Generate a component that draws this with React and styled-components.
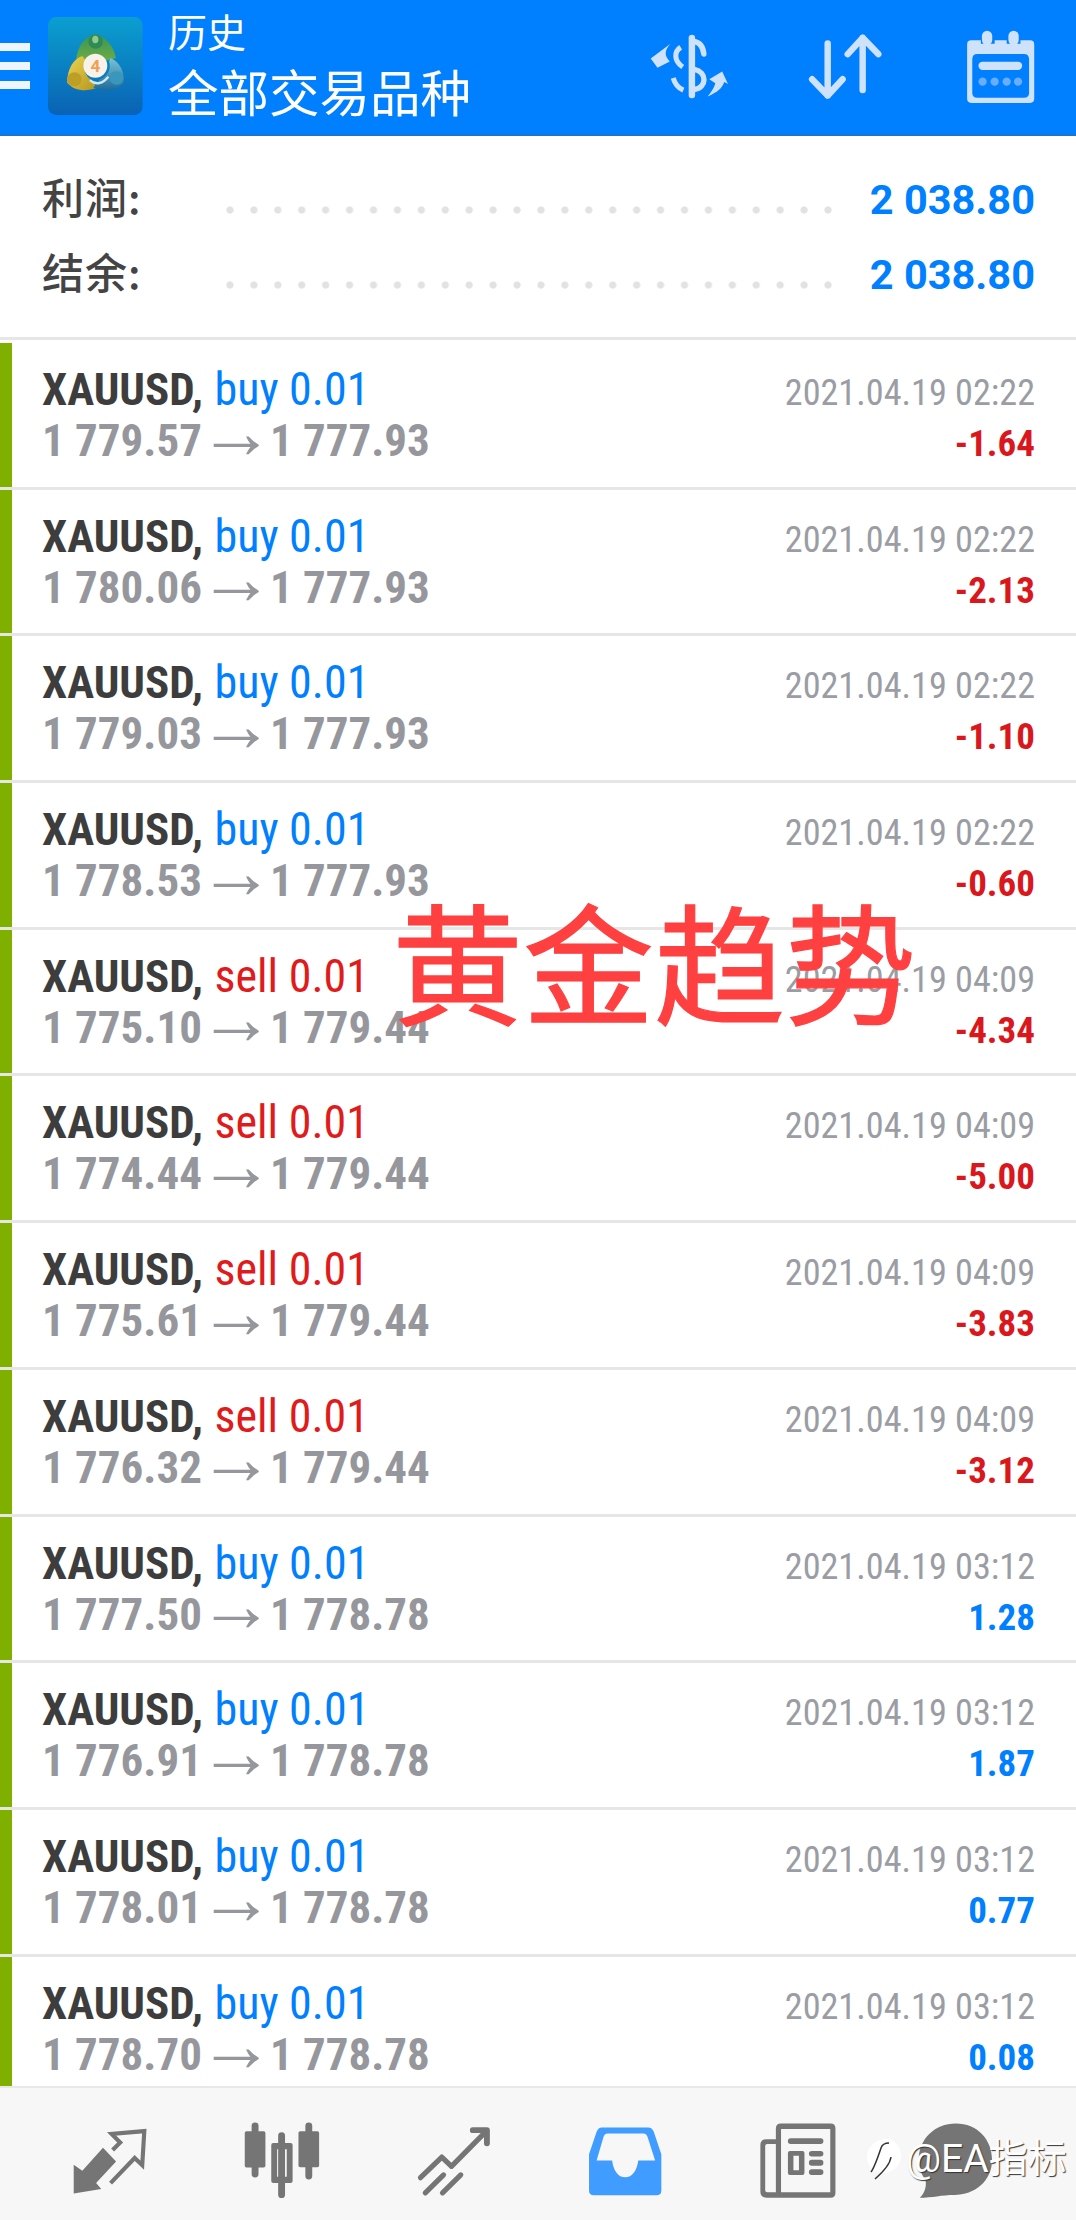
import React from "react";
import styled, { createGlobalStyle } from "styled-components";

const Global = createGlobalStyle`
  html, body { margin: 0; padding: 0; background: #fff; }
  body { font-family: Roboto, "Noto Sans CJK SC", sans-serif; }
`;

const cjk = `"Noto Sans CJK SC", "Noto Sans", sans-serif`;
const roboto = `Roboto, "Liberation Sans", sans-serif`;

const Page = styled.div`
  position: relative;
  width: 1076px;
  height: 2220px;
  display: flex;
  flex-direction: column;
  overflow: hidden;
  background: #fff;
`;

const Header = styled.header`
  flex: none;
  height: 134px;
  background: #007fff;
  border-bottom: 2px solid #1b74d2;
  display: flex;
  align-items: center;
  color: #fff;
`;
const Burger = styled.div`
  width: 30px;
  height: 46px;
  margin-top: -2px;
  display: flex;
  flex-direction: column;
  justify-content: space-between;
  & > i { display: block; height: 8px; background: #eef5ff; }
`;
const LogoBox = styled.svg`
  width: 96px;
  height: 100px;
  margin-left: 18px;
  margin-top: -3px;
  flex: none;
`;
const Titles = styled.div`
  margin-left: 24px;
  margin-top: -5px;
  display: flex;
  flex-direction: column;
  font-family: ${cjk};
`;
const SubTitle = styled.div`
  font-size: 39px;
  line-height: 50px;
  margin-top: -4px;
  margin-bottom: 5px;
`;
const MainTitle = styled.div`
  font-size: 50.5px;
  line-height: 60px;
  white-space: nowrap;
`;
const HeadIcons = styled.div`
  margin-left: auto;
  margin-right: 41px;
  display: flex;
  align-items: center;
`;
const HeadIcon = styled.svg`
  display: block;
  flex: none;
  margin-left: ${(p) => p.$ml}px;
`;

const Summary = styled.section`
  flex: none;
  height: 204px;
  padding: 35px 41px 0 42px;
  box-sizing: border-box;
  border-bottom: 3px solid #e6e6e6;
  display: flex;
  flex-direction: column;
  gap: 18px;
`;
const SumRow = styled.div`
  display: flex;
  height: 57px;
  align-items: center;
`;
const SumLabel = styled.div`
  width: 184px;
  flex: none;
  font-family: ${cjk};
  font-size: 42px;
  font-weight: 500;
  color: #444;
  margin-top: -8px;
  letter-spacing: 1px;
`;
const Dots = styled.div`
  flex: none;
  width: 608px;
  height: 8px;
  margin-top: 20px;
  background: radial-gradient(circle, #e2e2e2 3.2px, transparent 4px) -8px 0 / 23.93px 8px repeat-x;
`;
const SumValue = styled.div`
  margin-left: auto;
  font-family: ${roboto};
  font-weight: 700;
  font-size: 41.5px;
  color: #007fff;
  white-space: nowrap;
`;

const List = styled.main`
  flex: 1;
  min-height: 0;
  padding-top: 3px;
  overflow: hidden;
`;
const Row = styled.div`
  height: 146.7px;
  box-sizing: border-box;
  border-bottom: 3px solid #e6e6e6;
  padding: 0 41px 0 0;
  display: flex;
  font-family: ${roboto};
`;
const Bar = styled.div`
  flex: none;
  width: 12px;
  background: #7fb000;
`;
const LeftCol = styled.div`
  margin-left: 30px;
  display: flex;
  flex-direction: column;
`;
const RightCol = styled.div`
  margin-left: auto;
  display: flex;
  flex-direction: column;
  align-items: flex-end;
`;
const Title = styled.div`
  font-size: 45px;
  line-height: 51px;
  margin-top: 21px;
  font-stretch: 75%;
  white-space: nowrap;
  color: #3d3d3d;
  font-weight: 700;
`;
const Trade = styled.span`
  font-weight: 400;
  font-size: 46px;
  margin-left: 1px;
  color: ${(p) => (p.$sell ? "#e01b1b" : "#007fff")};
`;
const Prices = styled.div`
  font-size: 45px;
  line-height: 51px;
  font-stretch: 75%;
  font-weight: 700;
  color: #96979c;
  white-space: nowrap;
  display: flex;
  align-items: center;
`;
const Arrow = styled.span`
  flex: none;
  width: 46px;
  margin: -18px 11px 0 11px;
  display: flex;
  justify-content: center;
  font-family: ${roboto};
  font-weight: 400;
  font-size: 76px;
  line-height: 0;
  font-stretch: 100%;
`;
const DateText = styled.div`
  font-size: 36.2px;
  line-height: 51px;
  margin-top: 24px;
  font-stretch: 75%;
  color: #9a9da3;
  white-space: nowrap;
`;
const Profit = styled.div`
  font-size: 37px;
  line-height: 51px;
  font-stretch: 75%;
  font-weight: 700;
  color: ${(p) => (p.$neg ? "#d9171c" : "#007fff")};
`;

const Footer = styled.footer`
  flex: none;
  height: 134px;
  box-sizing: border-box;
  background: #f7f7f7;
  border-top: 2px solid #e8e8e8;
  padding: 14px 20px 0 24px;
  display: grid;
  grid-template-columns: repeat(6, 172px);
  align-items: center;
  justify-items: center;
`;
const FootIcon = styled.svg`
  display: block;
  fill: ${(p) => (p.$active ? "#409cff" : "#757575")};
  stroke: none;
  transform: translateX(${(p) => p.$dx || 0}px);
`;

const Stamp = styled.div`
  position: absolute;
  left: 392px;
  top: 878px;
  font-family: ${cjk};
  font-weight: 400;
  font-size: 131px;
  line-height: 160px;
  color: #ff4040;
  -webkit-text-stroke: 1.2px #ff4040;
  white-space: nowrap;
`;
const Mark = styled.div`
  position: absolute;
  left: 866px;
  top: 2134px;
  display: flex;
  align-items: center;
  gap: 4px;
  font-family: ${roboto}, ${cjk};
  font-size: 39px;
  line-height: 50px;
  color: #fff;
  text-shadow: 1px 1px 1px #333;
  white-space: nowrap;
`;
const MarkIcon = styled.svg`
  display: block;
  flex: none;
`;

const rows = [
  ["buy", "1 779.57", "1 777.93", "02:22", "-1.64"],
  ["buy", "1 780.06", "1 777.93", "02:22", "-2.13"],
  ["buy", "1 779.03", "1 777.93", "02:22", "-1.10"],
  ["buy", "1 778.53", "1 777.93", "02:22", "-0.60"],
  ["sell", "1 775.10", "1 779.44", "04:09", "-4.34"],
  ["sell", "1 774.44", "1 779.44", "04:09", "-5.00"],
  ["sell", "1 775.61", "1 779.44", "04:09", "-3.83"],
  ["sell", "1 776.32", "1 779.44", "04:09", "-3.12"],
  ["buy", "1 777.50", "1 778.78", "03:12", "1.28"],
  ["buy", "1 776.91", "1 778.78", "03:12", "1.87"],
  ["buy", "1 778.01", "1 778.78", "03:12", "0.77"],
  ["buy", "1 778.70", "1 778.78", "03:12", "0.08"],
];

const Logo = () => (
  <LogoBox viewBox="140 50 280 290">
    <defs>
      <linearGradient id="lg" x1="0" y1="0" x2="0" y2="1">
        <stop offset="0" stopColor="#0b9fd0" />
        <stop offset="1" stopColor="#0a62b4" />
      </linearGradient>
      <linearGradient id="gr" x1="0" y1="0" x2="0" y2="1">
        <stop offset="0" stopColor="#3a9455" />
        <stop offset="1" stopColor="#6fae45" />
      </linearGradient>
      <linearGradient id="ye" x1="0" y1="0" x2="1" y2="1">
        <stop offset="0" stopColor="#eed552" />
        <stop offset="1" stopColor="#b3951d" />
      </linearGradient>
      <linearGradient id="bl" x1="0" y1="0" x2="0" y2="1">
        <stop offset="0" stopColor="#78c4d8" />
        <stop offset="1" stopColor="#1c6a9b" />
      </linearGradient>
    </defs>
    <rect x="140" y="52" width="276" height="286" rx="24" fill="url(#lg)" />
    <path d="M278 102C250 108 226 136 222 176L252 186C264 168 292 166 308 180L338 172C332 136 306 108 278 102Z" fill="url(#gr)" />
    <circle cx="279" cy="124" r="21" fill="#2f8a55" />
    <ellipse cx="278" cy="118" rx="9" ry="11" fill="#8fcb8e" />
    <path d="M240 166C212 176 196 206 196 244C216 268 252 272 284 258L262 232C246 220 240 192 248 176Z" fill="url(#ye)" />
    <circle cx="217" cy="234" r="21" fill="#bd9f26" />
    <path d="M322 172C350 184 364 212 360 244C342 268 302 274 272 258L292 234C312 228 326 204 318 182Z" fill="url(#bl)" />
    <circle cx="340" cy="230" r="20" fill="#3a96bb" />
    <path d="M262 236C280 252 300 246 316 226" fill="none" stroke="#cfe8ee" strokeWidth="7" />
    <circle cx="278" cy="194" r="35" fill="#f7f3ea" />
    <text x="278" y="212" textAnchor="middle" fontFamily="Roboto, sans-serif" fontWeight="700" fontSize="50" fill="#f0a050">4</text>
  </LogoBox>
);

const SwapIcon = () => (
  <HeadIcon width="80" height="66" viewBox="325 95 235 190" $ml={0}>
    <g fill="none" stroke="#cfe2fb" strokeWidth="16" strokeLinecap="round">
      <path d="M451 105V272" strokeWidth="19" />
      <path d="M458 115C474 118 484 130 486 152" />
      <path d="M418 132C398 145 398 172 424 190" strokeLinecap="butt" strokeWidth="15" />
      <path d="M458 197C496 205 496 250 458 256" />
      <path d="M396 222C402 242 412 252 426 258" strokeLinecap="butt" strokeWidth="15" />
    </g>
    <path d="M330 165L388 122C372 140 368 155 386 174L350 192z" fill="#cfe2fb" />
    <path d="M557 240L540 203L502 226L520 238C516 252 508 264 497 277C526 264 540 252 546 234z" fill="#cfe2fb" />
  </HeadIcon>
);
const SortIcon = () => (
  <HeadIcon width="74" height="68" viewBox="785 95 218 198" $ml={79}>
    <g fill="none" stroke="#cfe2fb" strokeWidth="19" strokeLinecap="round" strokeLinejoin="round">
      <path d="M843 125V278M797 230L843 278L887 230" />
      <path d="M946 262V108M902 156L946 108L992 156" />
    </g>
  </HeadIcon>
);
const CalendarIcon = () => (
  <HeadIcon width="69" height="74" viewBox="1247 85 200 215" $ml={84}>
    <path fillRule="evenodd" fill="#cfe2fb" d="M1262 115H1290V125H1330V115H1365V125H1405V115H1433Q1445 115 1445 127V285Q1445 297 1433 297H1262Q1250 297 1250 285V127Q1250 115 1262 115ZM1280 155Q1265 155 1265 170V268Q1265 282 1280 282H1415Q1430 282 1430 268V170Q1430 155 1415 155Z" />
    <rect x="1293" y="87" width="30" height="42" rx="15" fill="#cfe2fb" />
    <rect x="1370" y="87" width="30" height="42" rx="15" fill="#cfe2fb" />
    <rect x="1283" y="177" width="127" height="24" rx="12" fill="#cfe2fb" />
    <g fill="#68aefc">
      <circle cx="1295" cy="235" r="12" />
      <circle cx="1330" cy="235" r="12" />
      <circle cx="1365" cy="235" r="12" />
      <circle cx="1398" cy="235" r="12" />
    </g>
  </HeadIcon>
);

const icon = (w, h) => ({ width: w / 2.904, height: h / 2.904 });

const TradeIcon = () => (
  <FootIcon {...icon(220, 200)} viewBox="210 225 220 200">
    <path d="M215 335V418L295 405L280 388L338 325L300 285L240 352z" />
    <path d="M322 388L392 315L414 336L420 237L325 245L350 270L328 292" fill="none" stroke="#757575" strokeWidth="12" />
  </FootIcon>
);
const CandleIcon = () => (
  <FootIcon {...icon(230, 230)} viewBox="700 210 230 230">
    <rect x="728" y="214" width="20" height="160" rx="10" />
    <rect x="708" y="240" width="60" height="105" rx="5" />
    <rect x="805" y="243" width="20" height="191" rx="10" />
    <path fillRule="evenodd" d="M791 274H841Q847 274 847 280V384Q847 390 841 390H791Q785 390 785 384V280Q785 274 791 274ZM802 292V372H830V292Z" />
    <rect x="884" y="214" width="20" height="166" rx="10" />
    <rect x="864" y="240" width="60" height="104" rx="5" />
  </FootIcon>
);
const ChartIcon = () => (
  <FootIcon {...icon(220, 210)} viewBox="1205 215 220 210">
    <g fill="none" stroke="#757575" strokeWidth="15" strokeLinecap="round" strokeLinejoin="round">
      <path d="M1218 368L1280 308L1308 335L1402 240" />
      <path d="M1232 412L1285 360M1282 412L1335 360" />
      <path d="M1370 230H1411V268" strokeWidth="17" />
    </g>
  </FootIcon>
);
const InboxIcon = () => (
  <FootIcon $active {...icon(220, 206)} viewBox="150 218 220 206">
    <path fillRule="evenodd" d="M190 222H325Q336 222 341 235L363 300V405Q363 419 349 419H167Q153 419 153 405V300L175 235Q180 222 190 222ZM208 240Q198 240 195 250L175 318H220C224 348 238 367 258 367C278 367 292 348 296 318H345L323 250Q320 240 310 240Z" />
  </FootIcon>
);
const NewsIcon = () => (
  <FootIcon {...icon(226, 224)} viewBox="648 208 226 224">
    <path fillRule="evenodd" d="M712 212H856Q870 212 870 226V414Q870 428 856 428H670Q652 428 652 410V275Q652 258 670 258H697V226Q697 212 712 212ZM712 228V412H855V228ZM697 272H672Q666 272 666 278V406Q666 412 672 412H697Z" />
    <rect x="732" y="255" width="103" height="17" rx="8" />
    <path fillRule="evenodd" d="M738 292H774Q780 292 780 298V356Q780 362 774 362H738Q732 362 732 356V298Q732 292 738 292ZM748 306V348H764V306Z" />
    <rect x="793" y="292" width="42" height="16" rx="8" />
    <rect x="793" y="318" width="42" height="17" rx="8" />
    <rect x="793" y="345" width="42" height="17" rx="8" />
  </FootIcon>
);
const ChatIcon = () => (
  <FootIcon $dx={-14} {...icon(220, 224)} viewBox="1110 208 220 224">
    <path d="M1220 212C1282 212 1325 258 1325 318C1325 380 1275 420 1215 420C1180 420 1150 428 1115 428C1130 415 1135 395 1132 378C1118 358 1112 338 1112 318C1112 258 1158 212 1220 212Z" />
  </FootIcon>
);

export default function App() {
  return (
    <Page>
      <Global />
      <Header>
        <Burger><i /><i /><i /></Burger>
        <Logo />
        <Titles>
          <SubTitle>历史</SubTitle>
          <MainTitle>全部交易品种</MainTitle>
        </Titles>
        <HeadIcons>
          <SwapIcon />
          <SortIcon />
          <CalendarIcon />
        </HeadIcons>
      </Header>
      <Summary>
        <SumRow>
          <SumLabel>利润:</SumLabel>
          <Dots />
          <SumValue>2 038.80</SumValue>
        </SumRow>
        <SumRow>
          <SumLabel>结余:</SumLabel>
          <Dots />
          <SumValue>2 038.80</SumValue>
        </SumRow>
      </Summary>
      <List>
        {rows.map(([side, from, to, time, profit], i) => (
          <Row key={i}>
            <Bar />
            <LeftCol>
              <Title>
                XAUUSD, <Trade $sell={side === "sell"}>{side} 0.01</Trade>
              </Title>
              <Prices>
                {from}<Arrow>→</Arrow>{to}
              </Prices>
            </LeftCol>
            <RightCol>
              <DateText>2021.04.19 {time}</DateText>
              <Profit $neg={profit.startsWith("-")}>{profit}</Profit>
            </RightCol>
          </Row>
        ))}
      </List>
      <Footer>
        <TradeIcon />
        <CandleIcon />
        <ChartIcon />
        <InboxIcon />
        <NewsIcon />
        <ChatIcon />
      </Footer>
      <Stamp>黄金趋势</Stamp>
      <Mark>
        <MarkIcon width="36" height="44" viewBox="0 0 36 44">
          <path d="M20 2C29 2 35 10 35 19C35 29 27 35 18 36C9 36 1 30 1 20C1 10 10 2 20 2Z" fill="#fff" />
          <path d="M5 35C8 31 13 17 15 11C16 8 19 6 23 6M25 20C24 28 17 35 9 42" fill="none" stroke="#333" strokeWidth="1.5" />
        </MarkIcon>
        <span>@EA指标</span>
      </Mark>
    </Page>
  );
}
